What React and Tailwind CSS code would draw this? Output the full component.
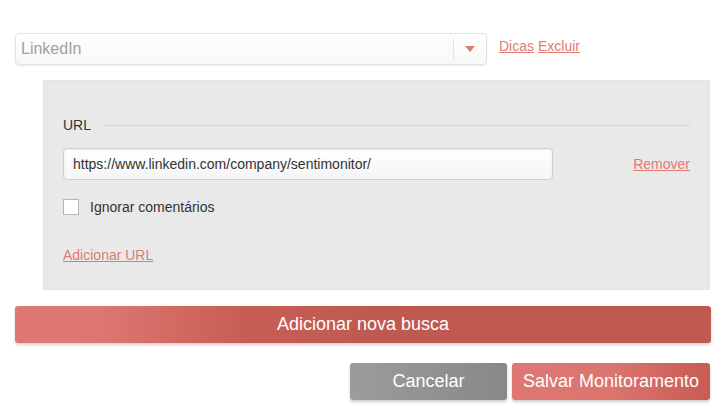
import React from "react";

export default function App() {
	return (
		<div className="min-h-[420px] w-[723px] bg-white font-['Liberation_Sans',Arial,sans-serif] text-[#333]">
			<div className="flex items-start pl-[15px] pt-[33px]">
				<div className="flex h-[32px] w-[472px] items-center rounded-[4px] border border-[#e2e2e2] bg-gradient-to-b from-white to-[#f7f7f7] shadow-[0_1px_2px_rgba(0,0,0,0.08)]">
					<span className="flex-1 pl-[5px] text-[16px] text-[#a0a0a0]">LinkedIn</span>
					<div className="flex h-[22px] w-[33px] items-center justify-center border-l border-[#e4e4e4]">
						<svg width="10" height="6" viewBox="0 0 10 6">
							<path d="M0 0 H10 L5 6 Z" fill="#e07b73" />
						</svg>
					</div>
				</div>
				<div className="ml-[12px] mt-[3px] flex gap-[4px] text-[14px] text-[#e07b73]">
					<a href="#" className="underline">Dicas</a>
					<a href="#" className="underline">Excluir</a>
				</div>
			</div>

			<div className="ml-[43px] mr-[13px] mt-[15px] h-[210px] border border-[#e3e3e3] bg-[#e9e9e9] px-[19px] pt-[36px]">
				<div className="flex items-center gap-[14px]">
					<span className="text-[14px] leading-[16px] text-[#333]">URL</span>
					<div className="h-px flex-1 bg-[#d4d4d4]" />
				</div>
				<div className="mt-[15px] flex items-center justify-between">
					<div className="flex h-[32px] w-[490px] items-center rounded-[4px] border border-[#cfcfcf] bg-gradient-to-b from-white to-[#f5f5f5] px-[9px] text-[14px] text-[#333] shadow-[inset_0_1px_2px_rgba(0,0,0,0.08)]">
						https://www.linkedin.com/company/sentimonitor/
					</div>
					<a href="#" className="text-[14px] text-[#e07b73] underline">Remover</a>
				</div>
				<label className="mt-[19px] flex items-center gap-[11px] text-[14px] leading-[16px] text-[#333]">
					<span className="h-[16px] w-[16px] border border-[#b5b5b5] bg-white" />
					Ignorar comentários
				</label>
				<a href="#" className="mt-[32px] block text-[14px] leading-[16px] text-[#e07b73] underline">Adicionar URL</a>
			</div>

			<button
				type="button"
				className="ml-[15px] mt-[16px] flex h-[37px] w-[696px] items-center justify-center rounded-[3px] bg-[linear-gradient(90deg,#df7873_0%,#de7771_12%,#c75e55_33%,#c05a50_50%,#c05a50_100%)] text-[18px] text-white shadow-[0_2px_3px_rgba(0,0,0,0.18)]"
			>
				Adicionar nova busca
			</button>

			<div className="mt-[20px] flex justify-end gap-[5px] pr-[13px]">
				<button
					type="button"
					className="flex h-[37px] w-[157px] items-center justify-center rounded-[3px] bg-gradient-to-r from-[#9c9c9c] to-[#888] text-[18px] text-white shadow-[0_2px_3px_rgba(0,0,0,0.2)]"
				>
					Cancelar
				</button>
				<button
					type="button"
					className="flex h-[37px] w-[198px] items-center justify-center rounded-[3px] bg-gradient-to-r from-[#df7873] via-[#dc7470] to-[#c65c53] text-[18px] text-white shadow-[0_2px_3px_rgba(0,0,0,0.2)]"
				>
					Salvar Monitoramento
				</button>
			</div>
		</div>
	);
}
